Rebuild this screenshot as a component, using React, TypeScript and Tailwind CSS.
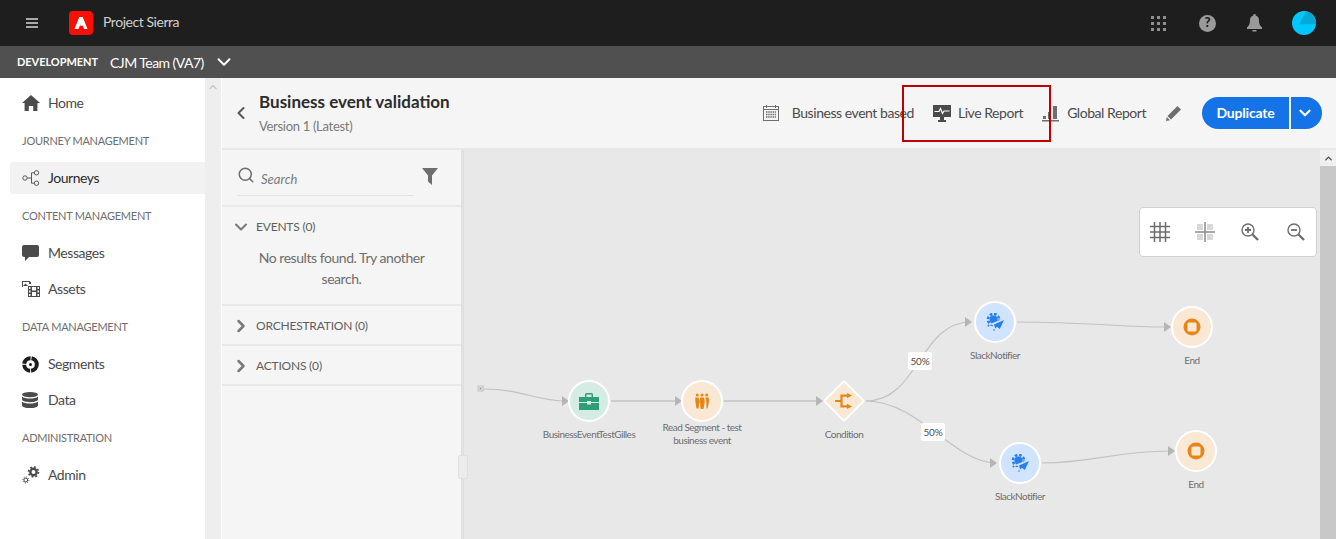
import React from 'react';
import { ChevronDown, ChevronLeft, ChevronRight, ChevronUp, Search } from 'lucide-react';

// Sidebar icons, drawn to match the product's filled glyphs
const HomeIcon = () => (
  <svg width="18" height="16" viewBox="0 0 18 16" fill="#4b4b4b">
    <path d="M9 0 18 8h-2.6v8h-4.2v-5H6.8v5H2.6V8H0z" />
  </svg>
);

const JourneyIcon = () => (
  <svg width="18" height="16" viewBox="0 0 18 16" fill="none" stroke="#5a5a5a" strokeWidth="1">
    <circle cx="3" cy="8" r="2.2" />
    <circle cx="14.5" cy="2.8" r="2.2" />
    <circle cx="14.5" cy="13.2" r="2.2" />
    <path d="M5.2 8H9M12.3 2.8H9.5V13.2h2.8" />
  </svg>
);

const MessageIcon = () => (
  <svg width="17" height="16" viewBox="0 0 17 16" fill="#4b4b4b">
    <path d="M2 0h13a2 2 0 0 1 2 2v8a2 2 0 0 1-2 2H7l-4 4v-4H2a2 2 0 0 1-2-2V2a2 2 0 0 1 2-2z" />
  </svg>
);

const AssetsIcon = () => (
  <svg width="18" height="16" viewBox="0 0 18 16" fill="#4b4b4b">
    <path d="M0 0h8v1H1v5H0z" />
    <path d="M1 5 3.5 2.5 6 5z" />
    <rect x="7" y="1" width="2" height="2" />
    <path d="M6 5h12v11H6zm1 1v2h1.5V6zm0 3.5v2h1.5v-2zM7 13v2h1.5v-2zm8.5-7v2H17V6zm0 3.5v2H17v-2zm0 3.5v2H17v-2zM10 6v3.5h4V6zm0 5v4h4v-4z" fillRule="evenodd" />
  </svg>
);

const SegmentsIcon = () => (
  <svg width="17" height="17" viewBox="0 0 17 17" fill="none">
    <circle cx="8.5" cy="8.5" r="6.3" stroke="#1d1d1d" strokeWidth="4" strokeDasharray="9 1 9 1 9 1 10 0" />
    <circle cx="8.5" cy="8.5" r="1.5" fill="#1d1d1d" />
  </svg>
);

const DataIcon = () => (
  <svg width="16" height="16" viewBox="0 0 16 16" fill="#4b4b4b">
    <ellipse cx="8" cy="2.6" rx="8" ry="2.6" />
    <path d="M0 4.4c1.4 1.4 4.6 2 8 2s6.6-.6 8-2v3.2c0 1.4-3.6 2.6-8 2.6S0 9 0 7.6z" />
    <path d="M0 9.6c1.4 1.4 4.6 2 8 2s6.6-.6 8-2v3.8C16 14.8 12.4 16 8 16s-8-1.2-8-2.6z" />
  </svg>
);

const AdminIcon = () => (
  <svg width="18" height="18" viewBox="0 0 18 18" fill="none" stroke="#4b4b4b">
    <circle cx="11.5" cy="6" r="3.2" strokeWidth="2.4" />
    <circle cx="11.5" cy="6" r="5" strokeWidth="1.6" strokeDasharray="1.9 2" />
    <circle cx="3.8" cy="14" r="1.9" strokeWidth="1" />
    <circle cx="3.8" cy="14" r="3" strokeWidth="1" strokeDasharray="1.1 1.2" />
  </svg>
);

const SectionLabel = ({ text }: { text: string }) => (
  <div className="h-[39px] flex items-center pl-[22px] pt-[2px] text-[11px] tracking-[-0.25px] text-[#6e6e6e]">{text}</div>
);

const NavItem = ({ icon, text, active }: { icon: React.ReactNode; text: string; active?: boolean }) => (
  <div className="h-[36px] flex items-center pl-[10px]">
    <div className={`h-[32px] w-full flex items-center rounded-l-[4px] ${active ? 'bg-[#f2f2f2] text-[#2c2c2c]' : 'text-[#4b4b4b]'}`}>
      <div className="w-[38px] pl-[12px] flex items-center shrink-0">{icon}</div>
      <span className="text-[14px] mb-[2px]">{text}</span>
    </div>
  </div>
);

const Sidebar = () => (
  <aside className="w-[205px] shrink-0 bg-white pt-[7px]">
    <NavItem icon={<HomeIcon />} text="Home" />
    <SectionLabel text="JOURNEY MANAGEMENT" />
    <NavItem icon={<JourneyIcon />} text="Journeys" active />
    <SectionLabel text="CONTENT MANAGEMENT" />
    <NavItem icon={<MessageIcon />} text="Messages" />
    <NavItem icon={<AssetsIcon />} text="Assets" />
    <SectionLabel text="DATA MANAGEMENT" />
    <NavItem icon={<SegmentsIcon />} text="Segments" />
    <NavItem icon={<DataIcon />} text="Data" />
    <SectionLabel text="ADMINISTRATION" />
    <NavItem icon={<AdminIcon />} text="Admin" />
  </aside>
);

const TopBar = () => (
  <div className="h-[46px] bg-[#1e1e1e] flex items-center pl-[26px] pr-[20px]">
    <svg width="12" height="10" viewBox="0 0 12 10" fill="#a8a8a8">
      <rect width="12" height="2" />
      <rect y="4" width="12" height="2" />
      <rect y="8" width="12" height="2" />
    </svg>
    <div className="ml-[31px] w-[24px] h-[24px] rounded-[4px] bg-[#fa0f00] flex items-center justify-center">
      <svg width="18" height="18" viewBox="0 0 24 24" fill="#fff">
        <path d="M9.7 4h4.6l6.4 16h-4.6l-1.7-4.3h-3.700l2.300-5.600L8.600 20H3.300z" />
      </svg>
    </div>
    <span className="ml-[10px] text-[14px] text-[#d0d0d0] mb-[4px]">Project Sierra</span>
    <div className="ml-auto flex items-center">
      <svg width="15" height="15" viewBox="0 0 15 15" fill="#8f8f8f">
        <rect width="3" height="3" />
        <rect x="6" width="3" height="3" />
        <rect x="12" width="3" height="3" />
        <rect y="6" width="3" height="3" />
        <rect x="6" y="6" width="3" height="3" />
        <rect x="12" y="6" width="3" height="3" />
        <rect y="12" width="3" height="3" />
        <rect x="6" y="12" width="3" height="3" />
        <rect x="12" y="12" width="3" height="3" />
      </svg>
      <div className="ml-[33px] w-[17px] h-[17px] rounded-full bg-[#9a9a9a] flex items-center justify-center text-[13px] tracking-normal font-black text-[#1e1e1e]">?</div>
      <svg className="ml-[31px]" width="15" height="18" viewBox="0 0 15 18" fill="#9a9a9a">
        <path d="M7.5 0a1.2 1.2 0 0 1 1.2 1.4C11 2 12 4 12 6.5c0 3 .8 5 3 7V15H0v-1.500c2.200-2 3-4 3-7C3 4 4 2 6.300 1.400A1.200 1.200 0 0 1 7.500 0z" />
        <rect x="5.500" y="16" width="4" height="1.500" />
      </svg>
      <svg className="ml-[30px]" width="24" height="24" viewBox="0 0 24 24">
        <circle cx="12" cy="12" r="12" fill="#00c8ff" />
        <path d="M7.300 13.300 14 .2A12 12 0 0 1 24 13.300z" fill="#06a8d4" />
      </svg>
    </div>
  </div>
);

const OrgBar = () => (
  <div className="h-[32px] bg-[#505050] flex items-center pl-[17px] text-white">
    <span className="text-[11px] font-bold tracking-[-0.05px]">DEVELOPMENT</span>
    <span className="ml-[12px] text-[14px] tracking-[-0.55px]">CJM Team (VA7)</span>
    <ChevronDown className="ml-[9px] text-white" size={22} strokeWidth={2.200} />
  </div>
);

const CalendarIcon = () => (
  <svg width="16" height="16" viewBox="0 0 16 16" fill="none" stroke="#6e6e6e">
    <rect x="0.5" y="1.500" width="15" height="14" />
    <path d="M3.500 0v3M12.500 0v3M0 4.500h16" />
    <path d="M3 7h10M3 9.500h10M3 12h10" strokeWidth="1.500" strokeDasharray="1.500 0.700" />
  </svg>
);

const MonitorIcon = () => (
  <svg width="18" height="17" viewBox="0 0 18 17" fill="#4b4b4b">
    <path d="M0 0h18v12H0z" />
    <rect x="7" y="12" width="4" height="3" />
    <rect x="5" y="15" width="8" height="2" />
    <path d="M1.500 6.500H6l1.500-3 2 5 1.500-2.500h5.500" fill="none" stroke="#fff" strokeWidth="1.200" />
  </svg>
);

const ChartIcon = () => (
  <svg width="17" height="17" viewBox="0 0 17 17" fill="#6e6e6e">
    <rect x="1" y="11" width="3" height="3" />
    <rect x="6" y="7" width="3" height="7" />
    <rect x="11" y="1" width="4" height="13" />
    <rect y="15" width="17" height="1.500" />
  </svg>
);

const PencilIcon = () => (
  <svg width="16" height="16" viewBox="0 0 16 16" fill="#6e6e6e">
    <path d="M11.500 1 15 4.500 5 14.500 1.500 11z" />
    <path d="M0.700 12 4 15.300 0 16z" />
  </svg>
);

const HeaderAction = ({ icon, text, gap }: { icon: React.ReactNode; text: string; gap: string }) => (
  <div className={`flex items-center ${gap}`}>
    {icon}
    <span className="text-[14px] text-[#4b4b4b] mb-[2px]">{text}</span>
  </div>
);

const PageHeader = () => (
  <div className="h-[72px] shrink-0 bg-[#f5f5f5] border-b-2 border-[#e8e8e8] flex items-center pl-[9px] pr-[14px]">
    <ChevronLeft size={20} strokeWidth={2.500} className="text-[#5a5a5a] mt-[-1px]" />
    <div className="ml-[8px] mt-[-1px]">
      <div className="text-[17px] font-bold leading-[22px] tracking-normal text-[#2c2c2c]">Business event validation</div>
      <div className="mt-[4px] text-[13px] leading-[18px] tracking-[-0.3px] text-[#7a7a7a]">Version 1 (Latest)</div>
    </div>
    <div className="ml-auto flex items-center">
      <HeaderAction icon={<CalendarIcon />} text="Business event based" gap="gap-[13px]" />
      <div className="ml-[19px]">
        <HeaderAction icon={<MonitorIcon />} text="Live Report" gap="gap-[7px]" />
      </div>
      <div className="ml-[19px]">
        <HeaderAction icon={<ChartIcon />} text="Global Report" gap="gap-[8px]" />
      </div>
      <div className="ml-[20px]">
        <PencilIcon />
      </div>
      <div className="ml-[20px] flex items-center gap-[2px]">
        <div className="h-[32px] w-[87px] bg-[#1473e6] rounded-l-full flex items-center justify-center text-white text-[14px] tracking-[-0.2px] font-bold">
          <span className="mb-[2px]">Duplicate</span>
        </div>
        <div className="h-[32px] w-[31px] bg-[#1473e6] rounded-r-full flex items-center justify-center text-white">
          <ChevronDown size={18} strokeWidth={3} className="mr-[3px]" />
        </div>
      </div>
    </div>
  </div>
);

const PanelRow = ({ text, open }: { text: string; open?: boolean }) => (
  <div className="h-[40px] flex items-center pl-[9px] gap-[5px] text-[12px] tracking-[-0.2px] text-[#5f5f5f]">
    {open ? <ChevronDown size={20} strokeWidth={2.500} className="text-[#7a7a7a]" /> : <ChevronRight size={20} strokeWidth={3} className="text-[#7a7a7a]" />}
    <span>{text}</span>
  </div>
);

const ActivityPanel = () => (
  <div className="w-[239px] shrink-0 bg-[#f5f5f5] relative">
    <div className="h-[57px] border-b-2 border-[#e8e8e8] flex items-start pl-[15px] pr-[23px]">
      <div className="w-[177px] h-[46px] border-b border-[#e3e3e3] flex items-center gap-[6px] pt-[14px]">
        <Search size={18} className="text-[#6e6e6e] mt-[-9px]" />
        <span className="text-[13px] italic tracking-normal text-[#7a7a7a]">Search</span>
      </div>
      <svg className="ml-auto mt-[18px]" width="16" height="17" viewBox="0 0 16 17" fill="#6e6e6e">
        <path d="M0 0h16L10 7.500V17L6 13.500V7.500z" />
      </svg>
    </div>
    <div className="border-b-2 border-[#e8e8e8] h-[99px]">
      <PanelRow text="EVENTS (0)" open />
      <div className="px-[30px] text-center text-[14px] leading-[21px] text-[#6e6e6e]">No results found. Try another search.</div>
    </div>
    <div className="border-b-2 border-[#e8e8e8] h-[40px]">
      <PanelRow text="ORCHESTRATION (0)" />
    </div>
    <div className="border-b-2 border-[#e8e8e8] h-[40px]">
      <PanelRow text="ACTIONS (0)" />
    </div>
  </div>
);

const GridIcon = () => (
  <svg width="20" height="20" viewBox="0 0 20 20" stroke="#6e6e6e" strokeWidth="1.500">
    <path d="M0 4.500h20M0 10h20M0 15.500h20M4.500 0v20M10 0v20M15.500 0v20" />
  </svg>
);

const SnapIcon = () => (
  <svg width="20" height="20" viewBox="0 0 20 20">
    <rect x="2" y="2" width="6" height="6" fill="#d8d8d8" />
    <rect x="12" y="2" width="6" height="6" fill="#d8d8d8" />
    <rect x="2" y="12" width="6" height="6" fill="#d8d8d8" />
    <rect x="12" y="12" width="6" height="6" fill="#d8d8d8" />
    <path d="M0 10h20M10 0v20" stroke="#8a8a8a" strokeWidth="1.500" />
  </svg>
);

const LensIcon = ({ plus }: { plus?: boolean }) => (
  <svg width="18" height="18" viewBox="0 0 18 18" fill="none" stroke="#6e6e6e">
    <circle cx="7" cy="7" r="6" strokeWidth="1.400" />
    <path d="M11.500 11.500 17 17" strokeWidth="2.400" />
    <path d={plus ? 'M4 7h6M7 4v6' : 'M4 7h6'} strokeWidth="1.800" />
  </svg>
);

const BriefcaseIcon = () => (
  <svg width="20" height="17" viewBox="0 0 20 17" fill="#2e9e78">
    <path d="M6 4V1.500A1.500 1.500 0 0 1 7.500 0h5A1.500 1.500 0 0 1 14 1.500V4h-1.500V1.500h-5V4z" />
    <path d="M0 4h20v5h-8V8H8v1H0z" />
    <path d="M0 10h8v1.500h4V10h8v7H0z" />
  </svg>
);

const PeopleIcon = () => (
  <svg width="14" height="16" viewBox="0 0 14 16" fill="#e68619">
    <circle cx="2.300" cy="2" r="1.500" />
    <circle cx="7" cy="2" r="1.500" />
    <circle cx="11.700" cy="2" r="1.500" />
    <path d="M0.300 4.500h3.400l.8 4-1 7H1.500l-1.200-7zM5 4.500h4l.8 4-1.300 7.500h-2.800l-1-7.500zM10.300 4.500h3.400l.3 4-1.500 7h-1l-.2-7z" />
  </svg>
);

const SplitIcon = () => (
  <svg width="18" height="16" viewBox="0 0 18 16" fill="none" stroke="#e68619" strokeWidth="2.200">
    <path d="M0 8h6M12 2.600H6.500v10.800H12" />
    <path d="M12 0l5 2.600-5 2.600zM12 10.800l5 2.600-5 2.600z" fill="#e68619" stroke="none" />
  </svg>
);

const StopIcon = () => (
  <svg width="18" height="18" viewBox="0 0 18 18">
    <circle cx="9" cy="9" r="8.500" fill="#e68619" />
    <rect x="4.500" y="4.500" width="9" height="9" rx="1.500" fill="#f9e8d4" />
  </svg>
);

const NotifierIcon = () => (
  <svg width="19" height="18" viewBox="0 0 19 18">
    <circle cx="7.500" cy="6.500" r="4" fill="#2680eb" />
    <circle cx="7.500" cy="6.500" r="5.500" fill="none" stroke="#2680eb" strokeWidth="2.600" strokeDasharray="2.600 1.700" />
    <path d="M4 11 19 5 14.500 18 10.500 15 8.500 17.500 7.500 12.500z" fill="#d0e3ff" />
    <path d="M8 11.500 18 7 13.800 16 11 13.800 9.300 15.500z" fill="#2680eb" />
    <circle cx="2.500" cy="12.500" r="1" fill="#2680eb" />
    <circle cx="8" cy="17" r="0.800" fill="#2680eb" />
  </svg>
);

const NodeLabel = ({ lines }: { lines: string[] }) => (
  <div className="w-[120px] h-[24px] flex flex-col items-center justify-center text-[10px] leading-[13px] tracking-[-0.5px] text-[#6e6e6e] text-center">
    {lines.map((line) => (
      <span key={line} className="whitespace-nowrap">{line}</span>
    ))}
  </div>
);

const CircleNode = ({ pos, bg, icon, lines }: { pos: string; bg: string; icon: React.ReactNode; lines: string[] }) => (
  <div className={`absolute w-[120px] flex flex-col items-center ${pos}`}>
    <div className={`w-[42px] h-[42px] rounded-full border-[2px] border-white flex items-center justify-center ${bg}`}>{icon}</div>
    <NodeLabel lines={lines} />
  </div>
);

const Percent = ({ pos }: { pos: string }) => (
  <div className={`absolute w-[24px] h-[18px] rounded-[2px] bg-white flex items-center justify-center text-[10px] tracking-[-0.2px] text-[#4b4b4b] ${pos}`}>50%</div>
);

const Canvas = () => (
  <div className="flex-1 relative overflow-hidden bg-[#e8e8e8]">
    <svg className="absolute inset-0" width="857" height="389" fill="none" stroke="#c2c2c2" strokeWidth="1.200">
      <path d="M19 239C60 239 70 251 103 251" />
      <path d="M147 251H212M260 251H353" strokeWidth="1.600" />
      <path d="M402 251C455 251 455 172 507 172" />
      <path d="M402 251C455 251 490 313 532 313" />
      <path d="M553 172C620 172 660 177 700 177" />
      <path d="M578 313C630 313 650 301 706 301" />
      <g fill="#b5b5b5" stroke="none">
        <path d="M98 246l7 5-7 5zM211 246l7 5-7 5zM352 246l7 5-7 5zM501 167l7 5-7 5zM526 308l7 5-7 5zM700 172l7 5-7 5zM704 296l7 5-7 5z" />
      </g>
      <rect x="14" y="236" width="5" height="5" stroke="#c2c2c2" strokeWidth="1" fill="#e8e8e8" />
      <rect x="15.500" y="237.500" width="2" height="2" fill="#a0a0a0" stroke="none" />
    </svg>

    <CircleNode pos="left-[65px] top-[230px]" bg="bg-[#d5ece4]" icon={<BriefcaseIcon />} lines={['BusinessEventTestGilles']} />
    <CircleNode pos="left-[178px] top-[230px]" bg="bg-[#f9e8d4]" icon={<PeopleIcon />} lines={['Read Segment - test', 'business event']} />

    {/* Condition diamond */}
    <div className="absolute left-[320px] top-[230px] w-[120px] flex flex-col items-center">
      <div className="w-[42px] h-[42px] flex items-center justify-center relative">
        <div className="absolute w-[30px] h-[30px] rotate-45 rounded-[2px] bg-[#f9e8d4] border-[2px] border-white" />
        <div className="relative flex"><SplitIcon /></div>
      </div>
      <NodeLabel lines={['Condition']} />
    </div>

    <CircleNode pos="left-[471px] top-[151px]" bg="bg-[#d0e3ff]" icon={<NotifierIcon />} lines={['SlackNotifier']} />
    <CircleNode pos="left-[496px] top-[292px]" bg="bg-[#d0e3ff]" icon={<NotifierIcon />} lines={['SlackNotifier']} />
    <CircleNode pos="left-[668px] top-[156px]" bg="bg-[#f9e8d4]" icon={<StopIcon />} lines={['End']} />
    <CircleNode pos="left-[672px] top-[280px]" bg="bg-[#f9e8d4]" icon={<StopIcon />} lines={['End']} />
    <Percent pos="left-[444px] top-[202px]" />
    <Percent pos="left-[457px] top-[273px]" />

    {/* Zoom tools */}
    <div className="absolute left-[675px] top-[57px] w-[178px] h-[50px] bg-white rounded-[4px] border border-[#d0d0d0] flex items-center pl-[10px]">
      <GridIcon />
      <div className="ml-[25px] flex"><SnapIcon /></div>
      <div className="ml-[26px] flex"><LensIcon plus /></div>
      <div className="ml-[28px] flex"><LensIcon /></div>
    </div>
  </div>
);

const App: React.FC = () => {
  return (
    <div className="relative w-full h-[539px] overflow-hidden bg-white tracking-[-0.45px] font-['Lato','Open_Sans',sans-serif]">
      <TopBar />
      <OrgBar />
      <div className="flex h-[461px]">
        <Sidebar />
        <div className="w-[16px] shrink-0 bg-[#eeeeee] flex justify-center pt-[3px]">
          <ChevronUp size={12} strokeWidth={3} className="text-[#c8c8c8]" />
        </div>
        <div className="flex-1 flex flex-col ml-[1px] min-w-0">
          <PageHeader />
          <div className="flex flex-1 min-h-0">
            <ActivityPanel />
            <div className="w-[3px] shrink-0 bg-[#e0e0e0]" />
            <Canvas />
            <div className="w-[16px] shrink-0 flex flex-col bg-[#f0f0f0]">
              <div className="h-[16px] flex items-center justify-center">
                <ChevronUp size={11} strokeWidth={3} className="text-[#4b4b4b]" />
              </div>
              <div className="flex-1 bg-[#c8c8c8]" />
            </div>
          </div>
        </div>
      </div>

      {/* Panel resize handle */}
      <div className="absolute left-[458px] top-[455px] w-[10px] h-[24px] rounded-[2px] bg-[#ececec] border border-[#e0e0e0]" />
      {/* Annotation frame drawn over the header */}
      <div className="absolute left-[902px] top-[85px] w-[149px] h-[57px] border-2 border-[#c00000]" />
    </div>
  );
};

export default App;
